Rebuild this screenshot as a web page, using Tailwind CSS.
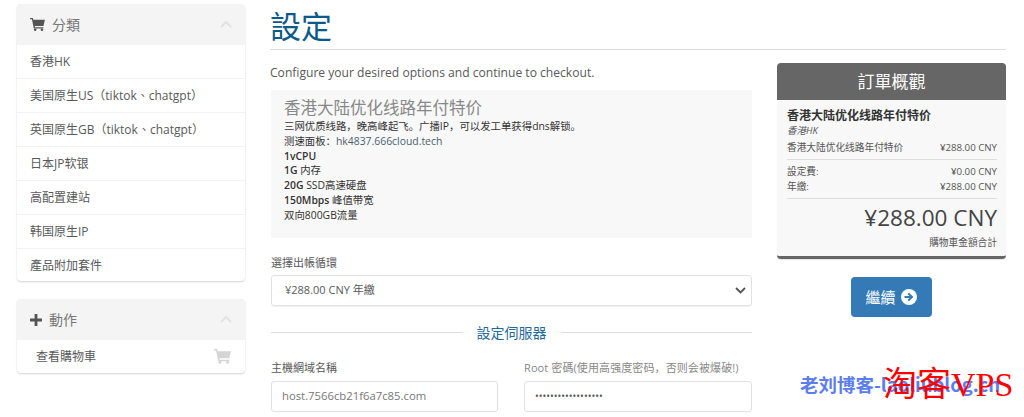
<!DOCTYPE html>
<html lang="zh">
<head>
<meta charset="UTF-8" />
<title>設定</title>
<script src="https://cdn.jsdelivr.net/npm/@tailwindcss/browser@4"></script>
</head>
<body class="bg-white h-[417px] overflow-hidden relative font-['Open_Sans','Noto_Sans_CJK_TC',sans-serif] text-[12px] text-[#58595b]">
<div class="flex items-start pl-[17px] pt-[4px]">
  <!-- sidebar -->
  <aside class="w-[228px] shrink-0 flex flex-col gap-[18px]">
    <div class="rounded-[4px] shadow-[0_1px_2px_rgba(0,0,0,0.18)] bg-white overflow-hidden">
      <div class="h-[41px] bg-[#f4f4f4] flex items-center pl-[13px] pr-[13px] text-[14px] text-[#777]">
        <svg class="w-[15px] h-[13px] mr-[7px]" viewBox="0 0 16 14" fill="#555"><path d="M0 0h3l.5 2H16l-1.6 6.6H5l.3 1.4h9v1.4H4L2 1.4H0z"/><circle cx="5.5" cy="12.6" r="1.4"/><circle cx="12.8" cy="12.6" r="1.4"/></svg>
        <span>分類</span>
        <svg class="ml-auto w-[12px] h-[7px]" viewBox="0 0 12 7" fill="none" stroke="#e2e2e2" stroke-width="2"><path d="M1 6l5-5 5 5"/></svg>
      </div>
      <div class="h-[34px] flex items-center pl-[13px] border-b border-[#f3f3f3]">香港HK</div>
      <div class="h-[34px] flex items-center pl-[13px] border-b border-[#f3f3f3]">美国原生US（tiktok、chatgpt）</div>
      <div class="h-[34px] flex items-center pl-[13px] border-b border-[#f3f3f3]">英国原生GB（tiktok、chatgpt）</div>
      <div class="h-[34px] flex items-center pl-[13px] border-b border-[#f3f3f3]">日本JP软银</div>
      <div class="h-[34px] flex items-center pl-[13px] border-b border-[#f3f3f3]">高配置建站</div>
      <div class="h-[34px] flex items-center pl-[13px] border-b border-[#f3f3f3]">韩国原生IP</div>
      <div class="h-[32px] flex items-center pl-[13px] pt-[1px]">產品附加套件</div>
    </div>
    <div class="rounded-[4px] shadow-[0_1px_2px_rgba(0,0,0,0.18)] bg-white overflow-hidden">
      <div class="h-[41px] bg-[#f4f4f4] flex items-center pl-[13px] pr-[13px] text-[14px] text-[#777]">
        <svg class="w-[12px] h-[12px] mr-[7px]" viewBox="0 0 12 12" fill="#555"><path d="M4.6 0h2.8v4.6H12v2.8H7.4V12H4.6V7.4H0V4.6h4.6z"/></svg>
        <span>動作</span>
        <svg class="ml-auto w-[12px] h-[7px]" viewBox="0 0 12 7" fill="none" stroke="#e2e2e2" stroke-width="2"><path d="M1 6l5-5 5 5"/></svg>
      </div>
      <div class="h-[33px] flex items-center pl-[19px] pr-[14px]">
        <span>查看購物車</span>
        <svg class="ml-auto w-[17px] h-[15px]" viewBox="0 0 16 14" fill="#d5d5d5"><path d="M0 0h3l.5 2H16l-1.6 6.6H5l.3 1.4h9v1.4H4L2 1.4H0z"/><circle cx="5.5" cy="12.6" r="1.4"/><circle cx="12.8" cy="12.6" r="1.4"/></svg>
      </div>
    </div>
  </aside>

  <!-- main -->
  <main class="ml-[26px] w-[735px]">
    <h1 class="h-[46px] border-b border-[#ddd] text-[31px] leading-[44px] text-[#0c5a8a] -ml-[1px]">設定</h1>
    <p class="mt-[14px] leading-[17px] text-[12.1px] -ml-[1px]">Configure your desired options and continue to checkout.</p>
    <div class="flex items-start">
      <div class="w-[481px] shrink-0">
        <div class="mt-[9px] h-[148px] bg-[#f8f8f8] pl-[13px] pt-[6px]">
          <div class="text-[16.5px] leading-[22px] text-[#888] font-['Noto_Sans_CJK_SC',serif] mb-[1px]">香港大陆优化线路年付特价</div>
          <div class="text-[10.4px] leading-[14.8px] text-[#333]">
            <div>三网优质线路，晚高峰起飞。广播IP，可以发工单获得dns解锁。</div>
            <div>测速面板：<span class="text-[#4a5f72]">hk4837.666cloud.tech</span></div>
            <div class="font-semibold">1vCPU</div>
            <div class="font-semibold">1G <span class="font-normal">内存</span></div>
            <div class="font-semibold">20G <span class="font-normal">SSD高速硬盘</span></div>
            <div class="font-semibold">150Mbps <span class="font-normal">峰值带宽</span></div>
            <div>双向800GB流量</div>
          </div>
        </div>
        <label class="block mt-[17px] text-[11px] leading-[16px]">選擇出帳循環</label>
        <div class="mt-[4px] h-[31px] border border-[#e2e2e2] rounded-[3px] shadow-[0_1px_1px_rgba(0,0,0,0.05)] flex items-center pl-[13px] pr-[5px]">
          <span class="text-[11px]">¥288.00 CNY 年繳</span>
          <svg class="ml-auto w-[11px] h-[7px]" viewBox="0 0 11 7" fill="none" stroke="#555" stroke-width="1.8"><path d="M1 1l4.5 4.5L10 1"/></svg>
        </div>
        <div class="mt-[16px] flex items-center h-[20px]">
          <div class="flex-1 border-t border-[#ddd]"></div>
          <span class="mx-[14px] text-[14px] text-[#1f6a9c]">設定伺服器</span>
          <div class="flex-1 border-t border-[#ddd]"></div>
        </div>
        <div class="mt-[19px] flex gap-[26px]">
          <div class="w-[227px]">
            <label class="block text-[11px] leading-[14px]">主機網域名稱</label>
            <div class="mt-[6px] h-[31px] border border-[#e2e2e2] rounded-[3px] flex items-center pl-[10px] text-[11.3px] text-[#777]">host.7566cb21f6a7c85.com</div>
          </div>
          <div class="w-[228px]">
            <label class="block text-[11px] leading-[14px] whitespace-nowrap text-[#888] tracking-[0.1px]">Root 密碼(使用高强度密码，否则会被爆破!)</label>
            <div class="mt-[6px] h-[31px] border border-[#e2e2e2] rounded-[3px] flex items-center pl-[10px] text-[10px] text-[#555]">••••••••••••••••••</div>
          </div>
        </div>
      </div>

      <!-- order summary -->
      <div class="ml-[25px] w-[229px] flex flex-col items-center">
        <div class="w-full rounded-[4px] overflow-hidden border-b-[3px] border-[#666] bg-[#f8f8f8] shadow-[0_1px_1px_rgba(0,0,0,0.1)] -mt-[18px]">
          <div class="h-[37px] bg-[#666] text-white text-[17px] flex items-center justify-center">訂單概觀</div>
          <div class="pl-[10px] pr-[9px] pt-[8px] h-[156px]">
            <div class="text-[12px] font-bold leading-[16px] text-[#333]">香港大陆优化线路年付特价</div>
            <div class="text-[9.5px] italic leading-[14px]">香港HK</div>
            <div class="flex justify-between text-[9.7px] leading-[14px] mt-[3px] pb-[4px] border-b border-[#ddd] text-[#555]"><span>香港大陆优化线路年付特价</span><span>¥288.00 CNY</span></div>
            <div class="flex justify-between text-[9.7px] leading-[15px] mt-[4px] text-[#555]"><span>設定費:</span><span>¥0.00 CNY</span></div>
            <div class="flex justify-between text-[9.7px] leading-[15px] pb-[4px] border-b border-[#ddd] text-[#555]"><span>年繳:</span><span>¥288.00 CNY</span></div>
            <div class="text-right text-[22.5px] leading-[32px] mt-[3px] text-[#444]">¥288.00 CNY</div>
            <div class="text-right text-[9.7px] leading-[14px] mt-[2px] text-[#555]">購物車金額合計</div>
          </div>
        </div>
        <button class="mt-[18px] w-[81px] h-[40px] rounded-[4px] bg-[#337ab7] text-white text-[15px] flex items-center justify-center gap-[5px] -ml-[1px]">
          <span>繼續</span>
          <svg class="w-[16px] h-[16px]" viewBox="0 0 16 16"><circle cx="8" cy="8" r="8" fill="#fff"/><path d="M3.5 7h5L6.6 5.1 8 3.8 12.4 8 8 12.2l-1.4-1.3L8.5 9h-5z" fill="#337ab7"/></svg>
        </button>
      </div>
    </div>
  </main>
</div>

<!-- watermark -->
<div class="absolute left-[800px] top-[374px] text-[18.5px] leading-[20px] font-bold text-[#5b7df0] whitespace-nowrap font-['Noto_Sans_CJK_SC',sans-serif]">老刘博客-laoliublog.cn</div>
<div class="absolute left-[883px] top-[365px] text-[34px] leading-[40px] text-[#f00] whitespace-nowrap font-['Liberation_Serif','Noto_Sans_CJK_SC',serif]">淘客VPS</div>
</body>
</html>
